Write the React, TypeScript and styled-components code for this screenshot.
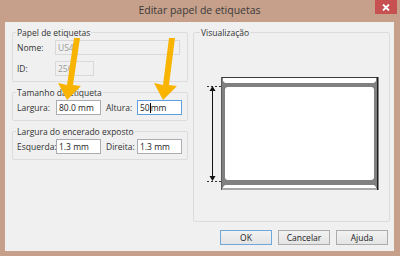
import React from "react";
import styled, { createGlobalStyle } from "styled-components";

const GlobalStyle = createGlobalStyle`
  html, body {
    margin: 0;
    padding: 0;
    background: #c6a08a;
  }
  body {
    font-family: "Open Sans", "Noto Sans", sans-serif;
  }
`;

const Window = styled.div`
  position: relative;
  width: 400px;
  height: 256px;
  box-sizing: border-box;
  padding: 0 6px 5px 5px;
  background: #c6a08a;
  display: flex;
  flex-direction: column;
`;

const TitleBar = styled.div`
  height: 22px;
  display: grid;
  grid-template-columns: 1fr auto 1fr;
  align-items: start;
`;

const Title = styled.div`
  grid-column: 2;
  font-size: 10.5px;
  line-height: 21px;
  color: #3a3a3a;
`;

const CloseButton = styled.div`
  grid-column: 3;
  justify-self: end;
  width: 22px;
  height: 14px;
  margin-right: -3px;
  background: #c75050;
  display: flex;
  align-items: center;
  justify-content: center;
`;

const Client = styled.div`
  flex: 1;
  background: #f0f0f0;
  box-sizing: border-box;
  padding: 5px 4px 6px 7px;
  display: flex;
  flex-direction: column;
`;

const Main = styled.div`
  display: flex;
  gap: 5px;
`;

const LeftColumn = styled.div`
  width: 176px;
  display: flex;
  flex-direction: column;
  gap: 5px;
`;

const Group = styled.fieldset<{ $height?: number }>`
  margin: 0;
  min-width: 0;
  box-sizing: border-box;
  border: 1px solid #dcdcdc;
  border-radius: 2px;
  padding: 0 6px 5px 4px;
  ${(p) => (p.$height ? `height: ${p.$height}px;` : "")}
`;

const Legend = styled.legend`
  padding: 0 1px;
  margin-left: -1px;
  font-size: 8.5px;
  line-height: 11px;
  color: #333;
`;

const Row = styled.div<{ $top: number }>`
  display: flex;
  align-items: center;
  height: 15px;
  margin-top: ${(p) => p.$top}px;
`;

const Label = styled.span<{ $width: number }>`
  width: ${(p) => p.$width}px;
  flex: none;
  font-size: 8.5px;
  color: #333;
`;

const TextBox = styled.div<{ $width: number; $state?: "disabled" | "focused" }>`
  width: ${(p) => p.$width}px;
  height: 15px;
  box-sizing: border-box;
  flex: none;
  padding: 0 2px;
  display: flex;
  align-items: center;
  font-size: 8.5px;
  white-space: nowrap;
  overflow: hidden;
  background: ${(p) => (p.$state === "disabled" ? "#f0f0f0" : "#ffffff")};
  color: ${(p) => (p.$state === "disabled" ? "#9a9a9a" : "#222")};
  border: 1px solid
    ${(p) =>
      p.$state === "disabled" ? "#d9d9d9" : p.$state === "focused" ? "#5d9fe0" : "#abadb3"};
`;

const Caret = styled.span`
  display: inline-block;
  width: 1px;
  height: 10px;
  background: #000;
`;

const PreviewGroup = styled(Group)`
  flex: 1;
  height: 195px;
  padding: 0;
`;

const Preview = styled.svg`
  display: block;
  margin: 37px 0 0 11px;
`;

const ButtonRow = styled.div`
  margin-top: auto;
  display: flex;
  justify-content: flex-end;
  gap: 6px;
  padding-right: 2px;
`;

const Button = styled.button<{ $default?: boolean }>`
  width: 52px;
  height: 15px;
  padding: 0;
  font-family: inherit;
  font-size: 8.5px;
  color: #222;
  background: linear-gradient(#f2f2f2, #e4e4e4);
  border: 1px solid ${(p) => (p.$default ? "#6fa7dd" : "#acacac")};
`;

const Annotations = styled.svg`
  position: absolute;
  left: 0;
  top: 0;
  pointer-events: none;
`;

function LabelPreview() {
  return (
    <Preview width="176" height="118" viewBox="0 0 176 118">
      <rect x="16" y="2" width="157" height="113" fill="#808080" />
      <rect x="16" y="2" width="157" height="1" fill="#3a3a3a" />
      <rect x="16" y="2" width="1" height="113" fill="#5a5a5a" />
      <polygon points="18,3 171,3 171,6 169,8 20,8 18,6" fill="#ffffff" />
      <rect x="20" y="12" width="149" height="93" rx="3" fill="#ffffff" />
      <polygon points="20,110 169,110 171,112 171,113 18,113 18,112" fill="#ffffff" />
      <rect x="17" y="113" width="155" height="2" fill="#a8a8a8" />
      <rect x="172" y="2" width="1.5" height="113" fill="#1e1e1e" />
      <line x1="2" y1="11.5" x2="16" y2="11.5" stroke="#333" strokeDasharray="2 2" />
      <line x1="2" y1="106.5" x2="16" y2="106.5" stroke="#333" strokeDasharray="2 2" />
      <line x1="7.5" y1="15" x2="7.5" y2="102" stroke="#111" />
      <polygon points="7.5,11 4.5,16 10.5,16" fill="#111" />
      <polygon points="7.5,106 4.5,101 10.5,101" fill="#111" />
    </Preview>
  );
}

export default function App() {
  return (
    <>
      <GlobalStyle />
      <Window>
        <TitleBar>
          <Title>Editar papel de etiquetas</Title>
          <CloseButton>
            <svg width="8" height="7" viewBox="0 0 8 7">
              <path d="M1 0.5 L7 6.5 M7 0.5 L1 6.5" stroke="#fff" strokeWidth="1.8" />
            </svg>
          </CloseButton>
        </TitleBar>
        <Client>
          <Main>
            <LeftColumn>
              <Group>
                <Legend>Papel de etiquetas</Legend>
                <Row $top={2}>
                  <Label $width={38}>Nome:</Label>
                  <TextBox $width={125} $state="disabled">US4</TextBox>
                </Row>
                <Row $top={6}>
                  <Label $width={38}>ID:</Label>
                  <TextBox $width={39} $state="disabled">256</TextBox>
                </Row>
              </Group>
              <Group>
                <Legend>Tamanho da etiqueta</Legend>
                <Row $top={2}>
                  <Label $width={39}>Largura:</Label>
                  <TextBox $width={45}>80.0 mm</TextBox>
                  <Label $width={31} style={{ marginLeft: 5 }}>Altura:</Label>
                  <TextBox $width={45} $state="focused">
                    50<Caret />mm
                  </TextBox>
                </Row>
              </Group>
              <Group>
                <Legend>Largura do encerado exposto</Legend>
                <Row $top={2}>
                  <Label $width={39}>Esquerda:</Label>
                  <TextBox $width={45}>1.3 mm</TextBox>
                  <Label $width={31} style={{ marginLeft: 5 }}>Direita:</Label>
                  <TextBox $width={45}>1.3 mm</TextBox>
                </Row>
              </Group>
            </LeftColumn>
            <PreviewGroup>
              <Legend style={{ marginLeft: 6 }}>Visualização</Legend>
              <LabelPreview />
            </PreviewGroup>
          </Main>
          <ButtonRow>
            <Button $default>OK</Button>
            <Button>Cancelar</Button>
            <Button>Ajuda</Button>
          </ButtonRow>
        </Client>
        <Annotations width="400" height="256" viewBox="0 0 400 256">
          <polygon points="74,38 80,38 73,85 81,86 67,100 58,83 67,85" fill="#f8b400" />
          <polygon points="169,38 175,38 169,85 177,86 163,100 154,83 163,85" fill="#f8b400" />
        </Annotations>
      </Window>
    </>
  );
}
